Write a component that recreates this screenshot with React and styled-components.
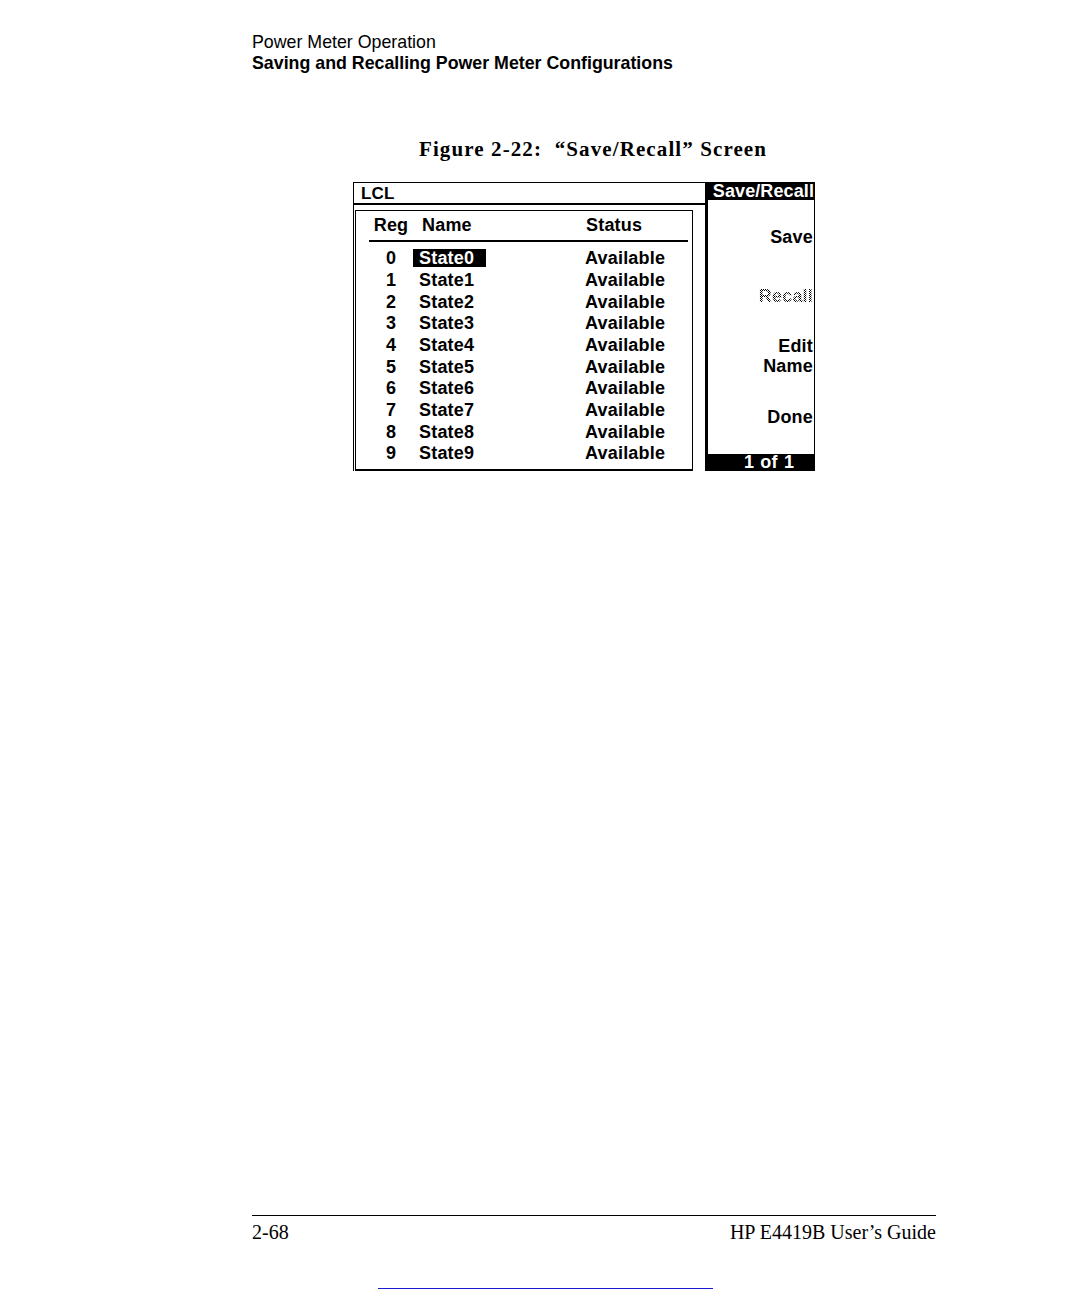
import React from "react";
import styled, { createGlobalStyle } from "styled-components";

const Global = createGlobalStyle`
  html, body { margin: 0; padding: 0; background: #fff; }
  body { font-family: "Liberation Sans", Arial, sans-serif; color: #000; }
`;

const Page = styled.div`
  width: 1080px;
  min-height: 1296px;
  display: flex;
  flex-direction: column;
  box-sizing: border-box;
  padding-top: 32px;
`;

const RunningHead = styled.header`
  margin-left: 252px;
  font-family: "Liberation Sans", Arial, sans-serif;
  font-size: 17.8px;
  line-height: 21px;
`;

const HeadLine = styled.div`
  font-weight: ${(p) => (p.$bold ? 700 : 400)};
  white-space: nowrap;
`;

const Caption = styled.div`
  margin: 63px 0 0 419px;
  font-family: "Liberation Serif", "Times New Roman", serif;
  font-weight: 700;
  font-size: 21px;
  line-height: 24px;
  letter-spacing: 1.1px;
  white-space: pre;
`;

const Screen = styled.div`
  margin: 21px 0 0 353px;
  width: 462px;
  height: 289px;
  display: grid;
  grid-template-columns: 352px 110px;
  font-family: "Liberation Sans", Arial, sans-serif;
  font-weight: 700;
  font-size: 18px;
  letter-spacing: 0.2px;
`;

const MainPane = styled.div`
  display: flex;
  flex-direction: column;
  border-left: 1px solid #000;
  border-top: 1px solid #000;
`;

const StatusBar = styled.div`
  height: 20px;
  line-height: 22px;
  padding-left: 7px;
  border-bottom: 2px solid #000;
  font-size: 17px;
`;

const Table = styled.div`
  flex: 1;
  margin: 5px 12px 0 1px;
  border: 1px solid #000;
  border-bottom-width: 2px;
  display: flex;
  flex-direction: column;
`;

const Grid = styled.div`
  display: grid;
  grid-template-columns: 13px 44px 170px 1fr;
  grid-auto-rows: 21.67px;
  align-items: center;
`;

const HeaderGrid = styled(Grid)`
  margin-top: 4px;
  grid-auto-rows: 21px;
`;

const Rule = styled.div`
  height: 2px;
  background: #000;
  margin: 4px 4px 6px 13px;
`;

const RegCell = styled.div`
  grid-column: 2;
  text-align: center;
`;

const NameCell = styled.div`
  grid-column: 3;
  padding-left: ${(p) => (p.$header ? 9 : 0)}px;
`;

const NameText = styled.span`
  display: inline-block;
  height: 18px;
  line-height: 18px;
  padding: 0 ${(p) => (p.$selected ? 12 : 8)}px 0 6px;
  background: ${(p) => (p.$selected ? "#000" : "transparent")};
  color: ${(p) => (p.$selected ? "#fff" : "#000")};
`;

const StatusCell = styled.div`
  grid-column: 4;
  padding-left: ${(p) => (p.$header ? 3 : 2)}px;
`;

const SoftPane = styled.div`
  display: flex;
  flex-direction: column;
  border-left: 3px solid #000;
  border-right: 1px solid #000;
`;

const SoftTitle = styled.div`
  height: 18px;
  line-height: 18px;
  background: #000;
  color: #fff;
  text-align: right;
  padding-right: 1px;
  margin-left: -3px;
  margin-right: -1px;
  white-space: nowrap;
  letter-spacing: 0.1px;
`;

const Keys = styled.div`
  flex: 1;
  display: flex;
  flex-direction: column;
`;

const Key = styled.div`
  flex: 1;
  display: flex;
  flex-direction: column;
  justify-content: center;
  align-items: flex-end;
  line-height: 20px;
  padding-right: 1px;
  transform: translateY(${(p) => p.$shift || 0}px);
`;

const Dithered = styled.span`
  color: transparent;
  background: repeating-conic-gradient(#000 0 25%, #fff 0 50%) 0 0 / 2px 2px;
  -webkit-background-clip: text;
  background-clip: text;
`;

const SoftFooter = styled.div`
  height: 17px;
  line-height: 17px;
  background: #000;
  color: #fff;
  text-align: center;
  padding-left: 18px;
  margin-left: -3px;
  margin-right: -1px;
  word-spacing: 1px;
`;

const Footer = styled.footer`
  margin: auto 144px 0 252px;
  border-top: 1px solid #000;
  padding-top: 4px;
  display: flex;
  justify-content: space-between;
  font-family: "Liberation Serif", "Times New Roman", serif;
  font-size: 20px;
  line-height: 24px;
`;

const LinkRule = styled.div`
  margin: 44px 0 7px 378px;
  width: 335px;
  height: 1px;
  background: #1a1ad0;
`;

const rows = Array.from({ length: 10 }, (_, i) => ({
  reg: String(i),
  name: `State${i}`,
  status: "Available",
}));

export default function App() {
  return (
    <>
      <Global />
      <Page>
        <RunningHead>
          <HeadLine>Power Meter Operation</HeadLine>
          <HeadLine $bold>Saving and Recalling Power Meter Configurations</HeadLine>
        </RunningHead>

        <Caption>{"Figure 2-22:  \u201CSave/Recall\u201D Screen"}</Caption>

        <Screen>
          <MainPane>
            <StatusBar>LCL</StatusBar>
            <Table>
              <HeaderGrid>
                <RegCell>Reg</RegCell>
                <NameCell $header>Name</NameCell>
                <StatusCell $header>Status</StatusCell>
              </HeaderGrid>
              <Rule />
              <Grid>
                {rows.map((r, i) => (
                  <React.Fragment key={r.reg}>
                    <RegCell>{r.reg}</RegCell>
                    <NameCell>
                      <NameText $selected={i === 0}>{r.name}</NameText>
                    </NameCell>
                    <StatusCell>{r.status}</StatusCell>
                  </React.Fragment>
                ))}
              </Grid>
            </Table>
          </MainPane>

          <SoftPane>
            <SoftTitle>Save/Recall</SoftTitle>
            <Keys>
              <Key $shift={5}>Save</Key>
              <Key $shift={1}>
                <Dithered>Recall</Dithered>
              </Key>
              <Key $shift={-3}>
                <span>Edit</span>
                <span>Name</span>
              </Key>
              <Key $shift={-5}>Done</Key>
            </Keys>
            <SoftFooter>1 of 1</SoftFooter>
          </SoftPane>
        </Screen>

        <Footer>
          <span>2-68</span>
          <span>HP E4419B User’s Guide</span>
        </Footer>
        <LinkRule />
      </Page>
    </>
  );
}
